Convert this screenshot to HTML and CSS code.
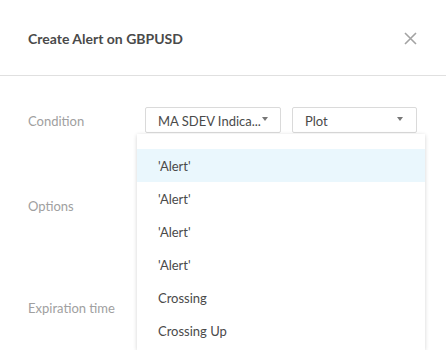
FILE: index.html
```html
<!DOCTYPE html>
<html>
<head>
<meta charset="utf-8">
<link rel="stylesheet" href="styles.css">
</head>
<body>
<div class="dialog">
  <div class="header">
    <div class="title">Create Alert on GBPUSD</div>
    <svg class="close" width="13" height="13" viewBox="0 0 13 13"><path d="M1 1L12 12M12 1L1 12" stroke="#a3a3a3" stroke-width="1.6" fill="none"/></svg>
  </div>
  <div class="body">
    <div class="row row-condition">
      <div class="label">Condition</div>
      <div class="controls">
        <div class="select select-a"><span>MA SDEV Indica...</span><i class="caret"></i></div>
        <div class="select select-b"><span>Plot</span><i class="caret"></i></div>
      </div>
    </div>
    <div class="row row-options">
      <div class="label">Options</div>
    </div>
    <div class="row row-exp">
      <div class="label">Expiration time</div>
    </div>
    <div class="menu">
      <div class="item active">'Alert'</div>
      <div class="item">'Alert'</div>
      <div class="item">'Alert'</div>
      <div class="item">'Alert'</div>
      <div class="item">Crossing</div>
      <div class="item">Crossing Up</div>
    </div>
  </div>
</div>
</body>
</html>
```
FILE: styles.css
```css
html, body { margin: 0; padding: 0; background: #fff; }
body { font-family: Lato, "Open Sans", sans-serif; width: 446px; height: 350px; overflow: hidden; }
.dialog { position: relative; height: 350px; overflow: hidden; }
.header {
  height: 75px;
  border-bottom: 1px solid #e0e0e0;
  display: flex;
  align-items: center;
  justify-content: space-between;
  padding: 0 29px 0 28px;
}
.title { font-size: 14px; font-weight: 700; color: #4a4a4a; margin-top: 1px; }
.close { display: block; margin-top: 1px; }
.body { position: relative; padding-top: 31px; }
.row { display: flex; align-items: center; padding-left: 28px; }
.label { width: 117px; font-size: 13px; color: #a0a0a0; padding-top: 1px; }
.row-condition { height: 26px; }
.row-options { margin-top: 59px; height: 26px; }
.row-exp { margin-top: 76px; height: 26px; }
.controls { display: flex; gap: 11px; }
.select {
  box-sizing: border-box;
  height: 26px;
  border: 1px solid #dadada;
  border-radius: 2px;
  display: flex;
  align-items: center;
  justify-content: space-between;
  font-size: 13px;
  color: #4a4a4a;
  padding-top: 1px;
}
.select-a { width: 136px; padding-left: 12px; padding-right: 12px; }
.select-b { width: 125px; padding-left: 12px; padding-right: 13px; }
.caret {
  width: 0; height: 0;
  border-left: 3.5px solid transparent;
  border-right: 3.5px solid transparent;
  border-top: 4px solid #777;
  margin-top: -3px;
}
.menu {
  position: absolute;
  left: 137px;
  top: 58px;
  width: 288px;
  height: 216px;
  box-sizing: border-box;
  overflow: hidden;
  background: #fff;
  box-shadow: 0 1px 4px rgba(0,0,0,0.18);
  padding-top: 15px;
}
.item {
  height: 33px;
  line-height: 35px;
  padding-left: 21px;
  font-size: 13px;
  color: #4a4a4a;
}
.item.active { background: #eaf7fd; }
```
